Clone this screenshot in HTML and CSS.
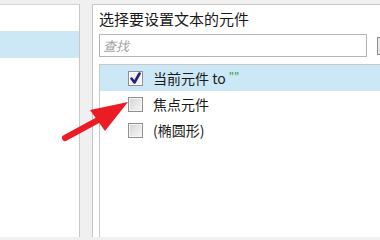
FILE: index.html
```html
<!DOCTYPE html>
<html lang="zh-CN">
<head>
<meta charset="utf-8">
<title>选择要设置文本的元件</title>
<link rel="stylesheet" href="styles.css">
</head>
<body>
<div class="window">
  <div class="left">
    <div class="left-sel"></div>
  </div>
  <div class="right">
    <div class="title">选择要设置文本的元件</div>
    <div class="search-row">
      <div class="search"><span class="ph">查找</span></div>
      <div class="btn"></div>
    </div>
    <div class="list">
      <div class="row selected">
        <span class="cb checked">
          <svg viewBox="0 0 13 13" width="13" height="13"><path d="M2.5 6.5 L5.5 10.5 L10.5 1.5" fill="none" stroke="#28237a" stroke-width="2.6" stroke-linejoin="round" stroke-linecap="round"/></svg>
        </span>
        <span class="label">当前元件 to <span class="str">""</span></span>
      </div>
      <div class="row">
        <span class="cb"></span>
        <span class="label">焦点元件</span>
      </div>
      <div class="row">
        <span class="cb"></span>
        <span class="label">(椭圆形)</span>
      </div>
    </div>
  </div>
</div>
<svg class="arrow" width="380" height="237" viewBox="0 0 380 237">
  <line x1="65" y1="138" x2="100" y2="119" stroke="#ec1c24" stroke-width="6" stroke-linecap="round"/>
  <polygon points="128,102 90,110 105,131" fill="#ec1c24"/>
</svg>
</body>
</html>
```

FILE: styles.css
```css
html, body {
  margin: 0;
  padding: 0;
}
body {
  background: #f0f0f0;
  font-family: "Noto Sans CJK SC", "Noto Sans", sans-serif;
  color: #1a1a1a;
  width: 380px;
  height: 237px;
  overflow: hidden;
  position: relative;
}
.window {
  display: flex;
  padding-top: 4px;
  height: 237px;
  box-sizing: border-box;
  overflow: hidden;
}
.left {
  width: 80px;
  flex-shrink: 0;
  box-sizing: border-box;
  background: #ffffff;
  border-top: 1px solid #d4d4d4;
  border-right: 1px solid #c8c8c8;
  padding-top: 26px;
}
.left-sel {
  height: 27px;
  background: #cce8f6;
}
.right {
  flex: 1;
  min-width: 0;
  overflow: hidden;
  margin-left: 12px;
  background: #ffffff;
  border-top: 1px solid #c8c8c8;
  border-left: 1px solid #c4c4c4;
  padding-left: 6px;
  display: flex;
  flex-direction: column;
}
.title {
  padding-top: 4px;
  font-size: 15px;
  line-height: 20px;
  height: 20px;
  white-space: nowrap;
}
.search-row {
  display: flex;
  align-items: center;
  margin-top: 5px;
  height: 23px;
}
.search {
  width: 268px;
  height: 23px;
  box-sizing: border-box;
  border: 1px solid #b4b4b4;
  background: #ffffff;
  display: flex;
  align-items: center;
  padding-left: 3px;
  flex-shrink: 0;
}
.ph {
  font-style: italic;
  font-size: 13px;
  color: #a3a3a3;
  line-height: 1;
}
.btn {
  margin-left: 10px;
  width: 30px;
  height: 18px;
  box-sizing: border-box;
  border: 1px solid #8c8c8c;
  background: #e8e8e8;
  flex-shrink: 0;
}
.list {
  margin-top: 7px;
  flex: 1;
  border-top: 1px solid #c8c8c8;
  border-left: 1px solid #c8c8c8;
}
.row {
  height: 26px;
  display: flex;
  align-items: center;
  padding-left: 28px;
  font-size: 14px;
  white-space: nowrap;
}
.row.selected {
  background: #cce8f6;
}
.cb {
  width: 15px;
  height: 15px;
  box-sizing: border-box;
  border: 1px solid #8f8f8f;
  background: linear-gradient(135deg, #d2d2d2 0%, #e6e6e6 50%, #f6f6f6 100%);
  box-shadow: inset 0 0 0 1px #f4f4f4;
  margin-right: 10px;
  display: flex;
  align-items: center;
  justify-content: center;
  flex-shrink: 0;
}
.cb.checked {
  background: #f2f2f2;
  box-shadow: inset 0 0 0 1px #ffffff;
}
.cb svg {
  display: block;
}
.label {
  line-height: 1;
}
.str {
  color: #2da42d;
  font-size: 11px;
  vertical-align: 2px;
}
.arrow {
  position: absolute;
  left: 0;
  top: 0;
  pointer-events: none;
}
```
